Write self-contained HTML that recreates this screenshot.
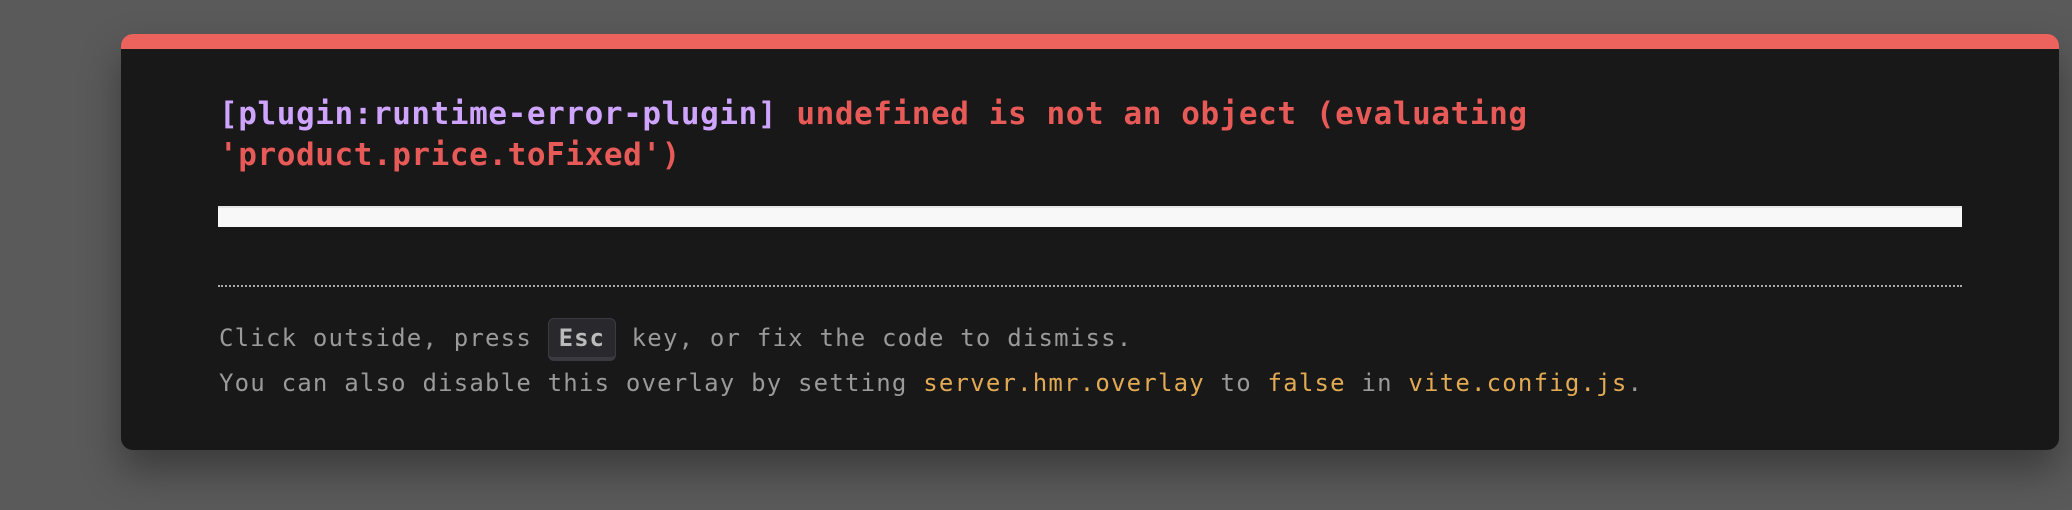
<!DOCTYPE html>
<html><head><meta charset="utf-8"><style>
html,body{margin:0;padding:0;}
body{width:2072px;height:510px;background:#5a5a5a;position:relative;overflow:hidden;font-family:"DejaVu Sans Mono","Liberation Mono",monospace;}
.card{position:absolute;left:121px;top:34px;width:1938px;height:416px;background:#181818;border-radius:12px;border-top:15px solid #ec625d;box-sizing:border-box;box-shadow:0 20px 40px rgba(0,0,0,0.35);}
.t{position:absolute;left:219px;font-size:31px;font-weight:bold;letter-spacing:0.58px;line-height:39px;white-space:pre;}
.p{color:#cfa4ff}.r{color:#e85a58}
.bar{position:absolute;left:218px;top:206px;width:1744px;height:21px;background:#f8f8f8;border-top:2px solid #e6e6e6;box-sizing:border-box;}
.dot{position:absolute;left:218px;top:285px;width:1744px;border-top:2px dotted #aaa;}
.f{position:absolute;left:219px;font-size:24px;letter-spacing:1.2px;color:#9a9a9a;white-space:pre;line-height:30px;}
.y{color:#e2aa53}
.kbd{display:inline-block;background:#29292d;border:1px solid #3a3a40;border-bottom:4px solid #3a3a40;border-radius:6px;color:#bbb;font-weight:bold;padding:0 10px;line-height:38px;letter-spacing:1px;vertical-align:middle;}
</style></head><body>
<div class="card"></div>
<div class="t" style="top:95px"><span class="p">[plugin:runtime-error-plugin]</span> <span class="r">undefined is not an object (evaluating</span></div>
<div class="t r" style="top:136px">'product.price.toFixed')</div>
<div class="bar"></div>
<div class="dot"></div>
<div class="f" style="top:315px;line-height:46px">Click outside, press <span class="kbd">Esc</span> key, or fix the code to dismiss.</div>
<div class="f" style="top:368px">You can also disable this overlay by setting <span class="y">server.hmr.overlay</span> to <span class="y">false</span> in <span class="y">vite.config.js</span>.</div>
</body></html>
